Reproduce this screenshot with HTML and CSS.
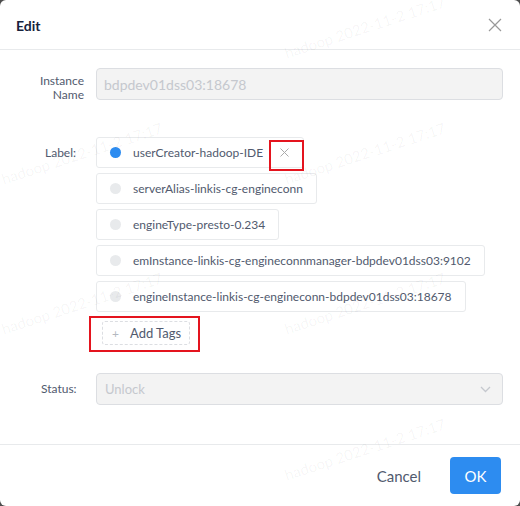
FILE: index.html
```html
<!DOCTYPE html>
<html>
<head>
<meta charset="utf-8">
<link rel="stylesheet" href="styles.css">
</head>
<body>
<div class="modal">
  <div class="header">
    <span class="title">Edit</span>
    <svg class="close" width="14" height="14" viewBox="0 0 14 14"><path d="M1 1L13 13M13 1L1 13" stroke="#999" stroke-width="1.2" fill="none"/></svg>
  </div>
  <div class="body">
    <div class="row row-instance">
      <div class="label label-two">Instance<br>Name</div>
      <div class="input disabled">bdpdev01dss03:18678</div>
    </div>
    <div class="row row-tags">
      <div class="label label-tags">Label:</div>
      <div class="tags">
        <div class="tag">
          <span class="dot dot-on"></span>
          <span class="tag-text">userCreator-hadoop-IDE</span>
          <svg class="tag-close" width="9" height="9" viewBox="0 0 9 9"><path d="M0.5 0.5L8.5 8.5M8.5 0.5L0.5 8.5" stroke="#aaa" stroke-width="1" fill="none"/></svg>
          <span class="mark mark-close"></span>
        </div>
        <div class="tag"><span class="dot"></span><span class="tag-text">serverAlias-linkis-cg-engineconn</span></div>
        <div class="tag"><span class="dot"></span><span class="tag-text">engineType-presto-0.234</span></div>
        <div class="tag"><span class="dot"></span><span class="tag-text">emInstance-linkis-cg-engineconnmanager-bdpdev01dss03:9102</span></div>
        <div class="tag"><span class="dot"></span><span class="tag-text">engineInstance-linkis-cg-engineconn-bdpdev01dss03:18678</span></div>
        <div class="add-tags">
          <span class="plus">+</span><span>Add Tags</span>
          <span class="mark mark-add"></span>
        </div>
      </div>
    </div>
    <div class="row row-status">
      <div class="label label-status">Status:</div>
      <div class="input disabled select">
        <span>Unlock</span>
        <svg class="chev" width="11" height="7" viewBox="0 0 11 7"><path d="M1 1L5.5 5.5L10 1" stroke="#c5c8ce" stroke-width="1.3" fill="none"/></svg>
      </div>
    </div>
  </div>
  <div class="footer">
    <button class="btn btn-text">Cancel</button>
    <button class="btn btn-primary">OK</button>
  </div>
  <span class="wm wm1">hadoop 2022-11-2 17:17</span>
  <span class="wm wm2">hadoop 2022-11-2 17:17</span>
  <span class="wm wm3">hadoop 2022-11-2 17:17</span>
  <span class="wm wm4">hadoop 2022-11-2 17:17</span>
  <span class="wm wm5">hadoop 2022-11-2 17:17</span>
  <span class="wm wm6">hadoop 2022-11-2 17:17</span>
</div>
</body>
</html>
```
FILE: styles.css
```css
* { box-sizing: border-box; }
html, body { margin: 0; padding: 0; }
body {
  background: #4d4d4d;
  font-family: "Lato", "Liberation Sans", Arial, sans-serif;
  color: #515a6e;
}
.modal {
  position: relative;
  width: 520px;
  height: 506px;
  background: #fff;
  border-radius: 6px;
  overflow: hidden;
  display: flex;
  flex-direction: column;
}
.header {
  height: 50px;
  border-bottom: 1px solid #e8eaec;
  display: flex;
  align-items: center;
  justify-content: space-between;
  padding: 0 18px 0 16px;
}
.title {
  font-size: 14px;
  font-weight: 700;
  color: #17233d;
  margin-top: 1px;
}
.close { display: block; }
.body {
  flex: 1;
  padding: 18px 17px 0 16px;
}
.row { display: flex; align-items: flex-start; }
.label {
  width: 80px;
  flex: none;
  padding-right: 12px;
  text-align: right;
  font-size: 12px;
  color: #515a6e;
}
.label-two { line-height: 14px; padding-top: 6px; }
.label-tags { padding-top: 8px; text-align: left; padding-left: 29px; padding-right: 0; }
.label-status { padding-top: 8px; text-align: left; padding-left: 25px; padding-right: 0; }
.input {
  flex: 1;
  height: 32px;
  border: 1px solid #dcdee2;
  border-radius: 4px;
  background: #f3f3f3;
  font-size: 14px;
  color: #c5c8ce;
  display: flex;
  align-items: center;
  padding: 0 10px 0 7px;
}
.select { justify-content: space-between; padding-left: 8px; font-size: 13px; }
.chev { display: block; margin-right: 1px; }
.row-tags { margin-top: 35px; }
.tags {
  display: flex;
  flex-direction: column;
  align-items: flex-start;
  gap: 5px;
}
.tag {
  position: relative;
  height: 31px;
  border: 1px solid #e8eaec;
  border-radius: 3px;
  display: flex;
  align-items: center;
  padding: 0 13px 0 13px;
  font-size: 12px;
  white-space: nowrap;
  color: #515a6e;
  background: #fff;
}
.dot {
  width: 11px;
  height: 11px;
  border-radius: 50%;
  background: #e8eaec;
  margin-right: 12px;
  flex: none;
}
.dot-on { background: #2d8cf0; }
.tag-close { display: block; margin-left: 17px; margin-right: 1px; }
.mark {
  position: absolute;
  border: 2px solid #e4141e;
  pointer-events: none;
}
.mark-close { left: 172px; top: 2px; width: 35px; height: 31px; }
.add-tags {
  position: relative;
  margin-top: 4px;
  margin-left: 6px;
  height: 24px;
  border: 1px dashed #dcdee2;
  border-radius: 3px;
  display: flex;
  align-items: center;
  padding: 0 8px 0 9px;
  font-size: 13px;
  color: #515a6e;
}
.plus { color: #b4b8c0; font-size: 12px; margin-right: 11px; }
.mark-add { left: -14px; top: -6px; width: 111px; height: 36px; }
.row-status { margin-top: 28px; }
.footer {
  height: 62px;
  border-top: 1px solid #e8eaec;
  display: flex;
  justify-content: flex-end;
  align-items: flex-start;
  padding: 12px 19px 0 0;
}
.btn {
  font-family: inherit;
  font-size: 15px;
  height: 37px;
  border: none;
  border-radius: 4px;
  cursor: pointer;
}
.btn-text { background: transparent; color: #515a6e; padding: 0 14px; margin-right: 15px; }
.btn-primary { background: #2d8cf0; color: #fff; width: 51px; padding: 0; }
.wm {
  position: absolute;
  font-size: 15px;
  color: rgba(0, 0, 0, 0.045);
  white-space: nowrap;
  transform: rotate(-18deg);
  transform-origin: left center;
  pointer-events: none;
}
.wm1 { left: 285px; top: 44px; }
.wm2 { left: 2px; top: 170px; }
.wm3 { left: 285px; top: 170px; }
.wm4 { left: 2px; top: 320px; }
.wm5 { left: 285px; top: 320px; }
.wm6 { left: 285px; top: 466px; }
```
